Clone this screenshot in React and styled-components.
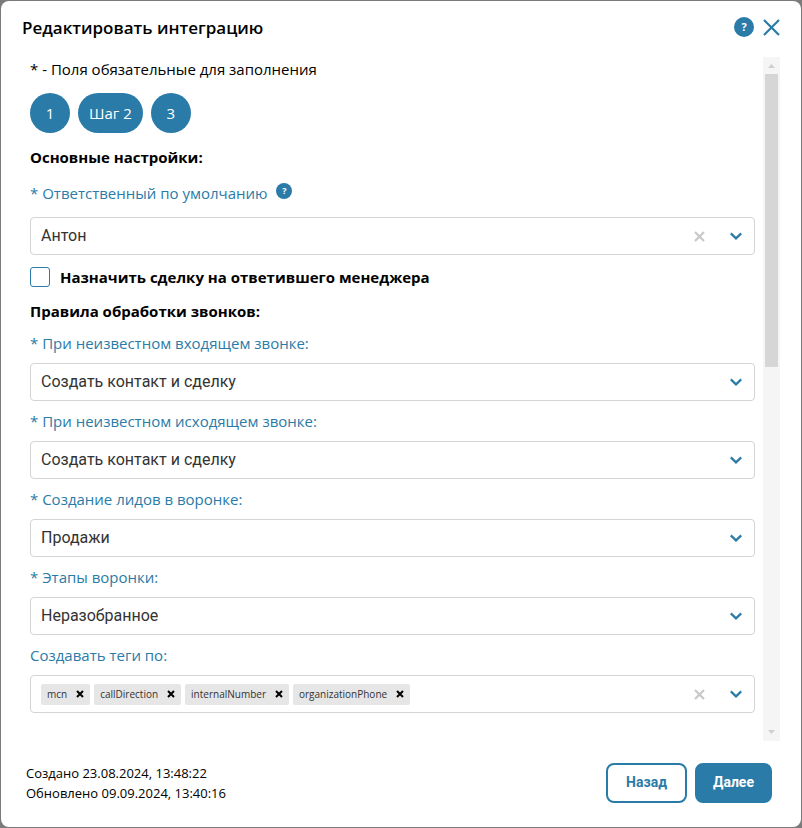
import React, { useState } from 'react';
import styled, { createGlobalStyle } from 'styled-components';

const blue = '#2a7ba8';
const uiFont = '"Open Sans", "Noto Sans", sans-serif';
const controlFont = 'Roboto, "Liberation Sans", sans-serif';

const GlobalStyle = createGlobalStyle`
  * { box-sizing: border-box; }
  body {
    background: #7b7b7b;
    color: #000;
    font-family: ${uiFont};
    font-size: 15px;
    line-height: 24px;
    margin: 0;
  }
`;

const Page = styled.div`
  display: flex;
  min-height: 100vh;
  padding: 1px;
`;

const Modal = styled.form`
  background: #fff;
  border-radius: 8px;
  display: flex;
  flex: 1;
  flex-direction: column;
  min-width: 0;
  padding: 14px 21px 24px;
`;

const Header = styled.header`
  align-items: center;
  display: flex;
  gap: 9px;
  height: 24px;
`;

const Title = styled.h1`
  flex: 1;
  font-size: 17px;
  font-weight: 600;
  line-height: 24px;
  margin: 0;
  padding-top: 2px;
`;

const IconButton = styled.button.attrs(() => ({
  type: 'button',
}))`
  align-items: center;
  background: none;
  border: none;
  color: ${({ $color }) => $color || blue};
  cursor: pointer;
  display: flex;
  justify-content: center;
  padding: 0;
`;

const HelpButton = styled(IconButton)`
  background: ${blue};
  border-radius: 50%;
  color: #fff;
  font-family: ${uiFont};
  font-size: ${({ $small }) => ($small ? 9 : 11)}px;
  font-weight: 700;
  height: ${({ $small }) => ($small ? 16 : 20)}px;
  line-height: 16px;
  margin-top: ${({ $small }) => ($small ? 2 : 0)}px;
  width: ${({ $small }) => ($small ? 16 : 20)}px;
`;

const Body = styled.div`
  display: flex;
  flex: 1;
  gap: 8px;
  margin-top: 18px;
  padding-left: 8px;
`;

const Content = styled.div`
  display: flex;
  flex: 1;
  flex-direction: column;
  gap: 12px;
  min-width: 0;
`;

const Text = styled.p`
  margin: 0;
`;

const Steps = styled.nav`
  display: flex;
  gap: 8px;
`;

const Step = styled.button.attrs(() => ({
  type: 'button',
}))`
  background: ${blue};
  border: none;
  border-radius: 20px;
  color: #fff;
  cursor: pointer;
  font-family: ${uiFont};
  font-size: 15px;
  height: 40px;
  min-width: 40px;
  padding: 0 11px;
`;

const SectionTitle = styled.h2`
  font-size: 15px;
  font-weight: 700;
  line-height: 24px;
  margin: 0;
`;

const Group = styled.section`
  display: flex;
  flex-direction: column;
  gap: 8px;
`;

const LabelRow = styled.div`
  display: flex;
  gap: 9px;
`;

const Label = styled.label`
  color: ${blue};
`;

const Control = styled.div`
  align-items: center;
  border: 1px solid #d4d4d4;
  border-radius: 4px;
  display: grid;
  grid-template-columns: 1fr 38px 36px;
  height: 38px;
  &:focus-within { border-color: ${blue}; }
`;

const Select = styled.select`
  appearance: none;
  background: none;
  border: none;
  color: #333;
  font-family: ${controlFont};
  font-size: 16px;
  grid-column: 1 / -1;
  grid-row: 1;
  height: 36px;
  outline: none;
  padding: 0 74px 2px 10px;
`;

const ClearButton = styled(IconButton)`
  grid-column: 2;
  grid-row: 1;
  height: 36px;
`;

const Arrow = styled.span`
  color: ${blue};
  display: flex;
  grid-column: 3;
  grid-row: 1;
  justify-content: center;
  pointer-events: none;
`;

const Tags = styled.ul`
  display: flex;
  gap: 4px;
  list-style: none;
  margin: 0;
  overflow: hidden;
  padding: 0 0 0 10px;
`;

const Tag = styled.li`
  align-items: center;
  background: #e6e6e6;
  border-radius: 2px;
  color: #333;
  display: flex;
  font-size: 10px;
  gap: 9px;
  height: 21px;
  padding: 0 6px;
`;

const CheckLabel = styled.label`
  align-items: center;
  display: flex;
  font-weight: 700;
  gap: 10px;
  height: 20px;
`;

const Checkbox = styled.input.attrs(() => ({
  type: 'checkbox',
}))`
  appearance: none;
  border: 1px solid ${blue};
  border-radius: 3px;
  height: 20px;
  margin: 0;
  width: 20px;
  &:checked { background: ${blue}; }
`;

const Scrollbar = styled.div`
  align-items: center;
  background: #f5f5f5;
  display: flex;
  flex-direction: column;
  width: 17px;
`;

const ScrollArrow = styled.svg`
  fill: #d0d0d0;
  height: 17px;
  width: 17px;
`;

const ScrollTrack = styled.div`
  flex: 1;
  width: 13px;
`;

const ScrollThumb = styled.div`
  background: #d6d6d6;
  height: 45%;
`;

const Footer = styled.footer`
  align-items: center;
  display: flex;
  gap: 8px;
  margin-top: 22px;
  padding: 0 8px 0 4px;
`;

const Dates = styled.div`
  flex: 1;
  font-size: 13px;
  line-height: 20px;
`;

const Button = styled.button`
  background: ${({ $primary }) => ($primary ? blue : '#fff')};
  border: 2px solid ${blue};
  border-radius: 8px;
  color: ${({ $primary }) => ($primary ? '#fff' : blue)};
  cursor: pointer;
  font-family: ${controlFont};
  font-size: 14px;
  font-weight: 700;
  height: 40px;
  padding: 0 ${({ $primary }) => ($primary ? 16 : 18)}px 2px;
`;

const Cross = ({ size, width }) => (
  <svg width={size} height={size} viewBox={`0 0 ${size} ${size}`} fill="none" stroke="currentColor" strokeWidth={width}>
    <path d={`M1 1L${size - 1} ${size - 1}M${size - 1} 1L1 ${size - 1}`} />
  </svg>
);

const Chevron = () => (
  <Arrow>
    <svg width="12" height="8" viewBox="0 0 12 8" fill="none" stroke="currentColor" strokeWidth="2.2">
      <path d="M.8 1.4L6 6.4L11.2 1.4" />
    </svg>
  </Arrow>
);

const SelectField = ({ id, label, value, help, clearable }) => (
  <React.Fragment>
    <LabelRow>
      <Label htmlFor={id}>{label}</Label>
      {help && <HelpButton $small aria-label="Справка">?</HelpButton>}
    </LabelRow>
    <Control>
      <Select id={id} defaultValue={value}>
        <option value={value}>{value}</option>
      </Select>
      {clearable && (
        <ClearButton $color="#c8c8c8" aria-label="Очистить">
          <Cross size={11} width={2.2} />
        </ClearButton>
      )}
      <Chevron />
    </Control>
  </React.Fragment>
);

const rules = [
  { id: 'incoming', label: '* При неизвестном входящем звонке:', value: 'Создать контакт и сделку' },
  { id: 'outgoing', label: '* При неизвестном исходящем звонке:', value: 'Создать контакт и сделку' },
  { id: 'pipeline', label: '* Создание лидов в воронке:', value: 'Продажи' },
  { id: 'stage', label: '* Этапы воронки:', value: 'Неразобранное' },
];

const App = () => {
  const [tags, setTags] = useState(['mcn', 'callDirection', 'internalNumber', 'organizationPhone']);

  return (
    <Page>
      <GlobalStyle />
      <Modal onSubmit={(e) => e.preventDefault()}>
        <Header>
          <Title>Редактировать интеграцию</Title>
          <HelpButton aria-label="Справка">?</HelpButton>
          <IconButton aria-label="Закрыть"><Cross size={17} width={2.2} /></IconButton>
        </Header>
        <Body>
          <Content>
            <Text>* - Поля обязательные для заполнения</Text>
            <Steps>
              <Step>1</Step>
              <Step>Шаг 2</Step>
              <Step>3</Step>
            </Steps>
            <SectionTitle>Основные настройки:</SectionTitle>
            <SelectField id="owner" label="* Ответственный по умолчанию" value="Антон" help clearable />
            <CheckLabel>
              <Checkbox />
              Назначить сделку на ответившего менеджера
            </CheckLabel>
            <Group>
              <SectionTitle>Правила обработки звонков:</SectionTitle>
              {rules.map((rule) => <SelectField key={rule.id} {...rule} />)}
              <Label id="tags-label" as="span">Создавать теги по:</Label>
              <Control role="group" aria-labelledby="tags-label">
                <Tags>
                  {tags.map((tag) => (
                    <Tag key={tag}>
                      {tag}
                      <IconButton
                        $color="#000"
                        aria-label={`Удалить ${tag}`}
                        onClick={() => setTags(tags.filter((t) => t !== tag))}
                      >
                        <Cross size={8} width={2} />
                      </IconButton>
                    </Tag>
                  ))}
                </Tags>
                <ClearButton $color="#c8c8c8" aria-label="Очистить" onClick={() => setTags([])}>
                  <Cross size={11} width={2.2} />
                </ClearButton>
                <Chevron />
              </Control>
            </Group>
          </Content>
          <Scrollbar aria-hidden="true">
            <ScrollArrow viewBox="0 0 17 17"><path d="M5 11L8.5 7L12 11Z" /></ScrollArrow>
            <ScrollTrack><ScrollThumb /></ScrollTrack>
            <ScrollArrow viewBox="0 0 17 17"><path d="M5 6L8.5 10L12 6Z" /></ScrollArrow>
          </Scrollbar>
        </Body>
        <Footer>
          <Dates>
            <Text>Создано 23.08.2024, 13:48:22</Text>
            <Text>Обновлено 09.09.2024, 13:40:16</Text>
          </Dates>
          <Button type="button">Назад</Button>
          <Button type="submit" $primary>Далее</Button>
        </Footer>
      </Modal>
    </Page>
  );
};

export default App;
